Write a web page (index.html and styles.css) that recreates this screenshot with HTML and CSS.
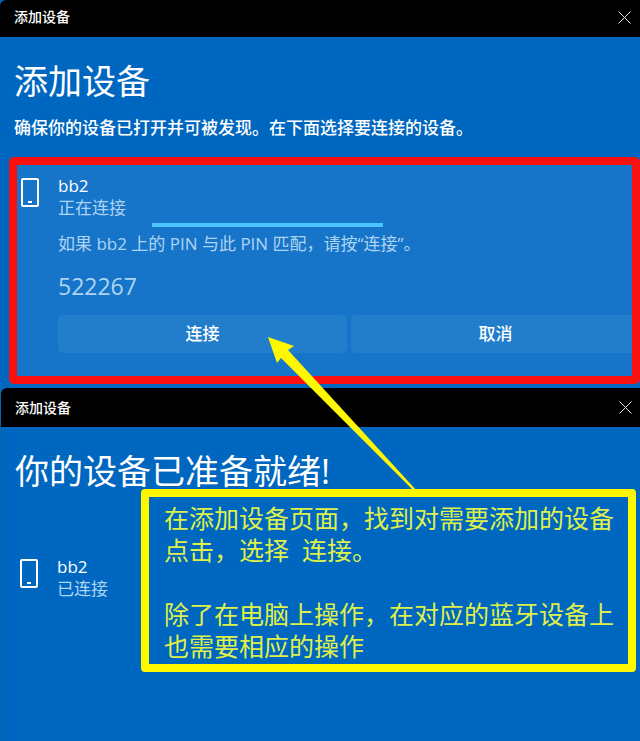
FILE: index.html
```html
<!DOCTYPE html>
<html lang="zh-CN">
<head>
  <meta charset="UTF-8" />
  <meta name="viewport" content="width=device-width, initial-scale=1.0"/>
  <title>添加设备</title>
  <link rel="stylesheet" href="styles.css">
</head>
<body>
  <!-- Pairing window -->
  <section class="window pairing">
    <header class="titlebar">
      <span>添加设备</span>
      <button class="close" aria-label="关闭">
        <svg width="13" height="13" viewBox="0 0 13 13"><path d="M.5 .5l12 12M12.5 .5l-12 12"/></svg>
      </button>
    </header>
    <h1>添加设备</h1>
    <p class="intro">确保你的设备已打开并可被发现。在下面选择要连接的设备。</p>

    <div class="card">
      <svg class="phone" width="18" height="29" viewBox="0 0 18 29"><rect x="1" y="1" width="16" height="27" rx="1"/><path d="M7 24h4"/></svg>
      <div class="details">
        <div class="name">bb2</div>
        <div class="status">正在连接</div>
        <div class="progress"></div>
        <p class="prompt">如果 bb2 上的 PIN 与此 PIN 匹配，请按“连接”。</p>
        <div class="pin">522267</div>
        <div class="actions">
          <button>连接</button>
          <button>取消</button>
        </div>
      </div>
    </div>
  </section>

  <!-- Ready window -->
  <section class="window ready">
    <header class="titlebar">
      <span>添加设备</span>
      <button class="close" aria-label="关闭">
        <svg width="13" height="13" viewBox="0 0 13 13"><path d="M.5 .5l12 12M12.5 .5l-12 12"/></svg>
      </button>
    </header>
    <h1>你的设备已准备就绪!</h1>
    <div class="device">
      <svg class="phone" width="18" height="29" viewBox="0 0 18 29"><rect x="1" y="1" width="16" height="27" rx="1"/><path d="M7 24h4"/></svg>
      <div class="details">
        <div class="name">bb2</div>
        <div class="status">已连接</div>
      </div>
    </div>

    <!-- Note and its arrow, over both windows -->
    <div class="note">
      <p>在添加设备页面，找到对需要添加的设备点击，选择&nbsp; 连接。</p>
      <p>除了在电脑上操作，在对应的蓝牙设备上也需要相应的操作</p>
    </div>
    <svg class="arrow" width="150" height="154" viewBox="0 0 150 154"><path d="M0 0L26 9L20 13L149 154H146L13 21L9 26Z"/></svg>
  </section>
</body>
</html>
```
FILE: styles.css
```css
* {
  box-sizing: border-box;
}
body {
  margin: 0;
  min-height: 100vh;
  display: flex;
  flex-direction: column;
  font-family: "Open Sans", "Noto Sans CJK SC", sans-serif;
  font-size: 17px;
  line-height: 22px;
  color: white;
  background: #0067c0;
}
h1, p {
  margin: 0;
  font-weight: 400;
}
button {
  font: inherit;
  color: inherit;
  border: none;
  cursor: pointer;
}
.titlebar {
  display: flex;
  align-items: center;
  justify-content: space-between;
  height: 37px;
  padding: 0 9px 3px 14px;
  font-size: 14px;
  font-weight: 500;
  background: black;
  border-radius: 6px 0 0 0;
}
.close {
  display: flex;
  padding: 0;
  background: none;
}
.close svg {
  stroke: #e6e6e6;
  stroke-width: 1;
  fill: none;
}
h1 {
  padding: 20px 14px 0;
  font-size: 34px;
  line-height: 48px;
}
.intro {
  padding: 12px 14px 0;
  font-weight: 500;
}

/* device being paired, framed in red */
.card {
  position: relative;
  display: flex;
  gap: 19px;
  margin: 18px 0 0 9px;
  padding: 18px 0 31px 12px;
  background: #1675c8;
  border-radius: 4px;
}
.card::after {
  content: "";
  position: absolute;
  inset: 0;
  border: 8px solid #f9100f;
  border-radius: 5px;
  pointer-events: none;
}
.phone {
  flex: none;
  margin-top: 3px;
  fill: none;
  stroke: white;
  stroke-width: 2;
}
.details {
  flex: 1;
}
.name {
  font-weight: 500;
}
.status, .prompt, .pin {
  color: #aed4f3;
}
.progress {
  width: 231px;
  height: 4px;
  margin: 4px 0 0 94px;
  background: #4cc2ff;
}
.prompt {
  margin-top: 6px;
}
.pin {
  margin-top: 15px;
  font-size: 23px;
  line-height: 32px;
}
.actions {
  display: grid;
  grid-template-columns: 1fr 1fr;
  gap: 4px;
  margin-top: 13px;
}
.actions button {
  height: 38px;
  font-weight: 500;
  background: #227dcb;
  border-radius: 5px;
}

.ready {
  position: relative;
  flex: 1;
  margin-top: 4px;
  border-left: 1px solid #0b66a8;
}
.ready .titlebar {
  height: 39px;
  padding: 0 8px 0 14px;
}
.device {
  display: flex;
  gap: 19px;
  padding: 61px 0 0 19px;
}

.note {
  position: absolute;
  top: 101px;
  left: 140px;
  right: 4px;
  padding: 5px 0 2px 15px;
  border: 8px solid #fff700;
  border-radius: 4px;
  font-size: 25px;
  line-height: 32px;
  color: #dff04a;
}
.note p + p {
  margin-top: 32px;
}
.arrow {
  position: absolute;
  top: -51px;
  left: 267px;
  fill: #fff700;
}
```
